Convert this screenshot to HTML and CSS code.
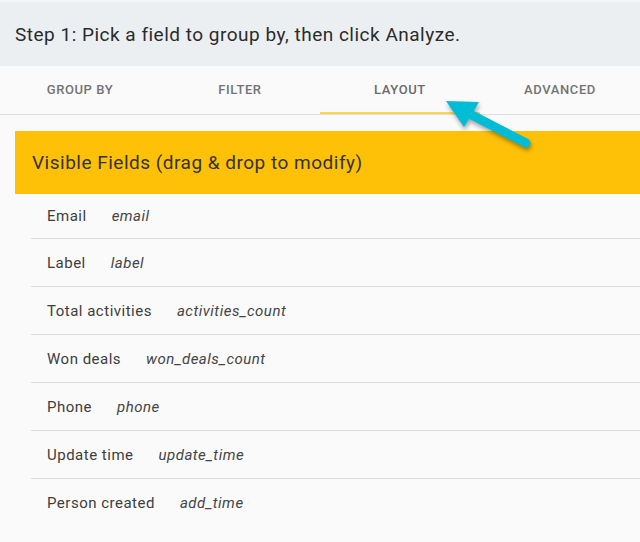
FILE: index.html
```html
<!DOCTYPE html>
<html lang="en">
<head>
	<meta charset="UTF-8">
	<title>Analyze - Layout</title>
	<link rel="stylesheet" href="styles.css">
</head>
<body>
	<div class="step">Step 1: Pick a field to group by, then click Analyze.</div>

	<div class="tabs">
		<a href="javascript:;" class="tab">Group by</a>
		<a href="javascript:;" class="tab">Filter</a>
		<a href="javascript:;" class="tab active">Layout</a>
		<a href="javascript:;" class="tab">Advanced</a>
	</div>

	<div class="content">
		<div class="panel">Visible Fields (drag &amp; drop to modify)</div>
		<ul class="fields">
			<li><span class="name">Email</span><span class="key">email</span></li>
			<li><span class="name">Label</span><span class="key">label</span></li>
			<li><span class="name">Total activities</span><span class="key">activities_count</span></li>
			<li><span class="name">Won deals</span><span class="key">won_deals_count</span></li>
			<li><span class="name">Phone</span><span class="key">phone</span></li>
			<li><span class="name">Update time</span><span class="key">update_time</span></li>
			<li><span class="name">Person created</span><span class="key">add_time</span></li>
		</ul>
	</div>

	<!-- callout arrow pointing at the layout tab -->
	<svg class="pointer" width="110" height="70" viewBox="0 0 110 70">
		<line x1="28" y1="18" x2="86" y2="48" stroke="#00bcd4" stroke-width="9" stroke-linecap="round"/>
		<polygon points="6,6 39,7 24,32" fill="#00bcd4"/>
	</svg>
</body>
</html>
```

FILE: styles.css
```css
body{margin:0;background:#fafafa;font-family:Roboto,"Liberation Sans",Arial,sans-serif;color:#333;position:relative;}
ul,li{margin:0;padding:0;list-style:none;}

.step{height:64px;border-top:2px solid #f5f6f7;background:#eceff1;display:flex;align-items:center;padding-left:15px;font-size:19px;letter-spacing:0.5px;color:#2b2b2b;}

.tabs{display:flex;border-bottom:1px solid #dedede;}
.tab{flex:1;height:48px;padding-bottom:2px;display:flex;align-items:center;justify-content:center;font-size:13px;font-weight:500;letter-spacing:0.6px;text-transform:uppercase;color:#737373;text-decoration:none;box-sizing:border-box;}
.tab.active{border-bottom:2px solid #ffd54f;padding-bottom:0;color:#6a6a6a;}

.content{padding:16px 0 0 15px;}
.panel{height:63px;background:#ffc107;display:flex;align-items:center;padding-left:17px;font-size:19px;letter-spacing:0.5px;color:#333;}

.fields{margin-left:16px;}
.fields li{height:47px;display:flex;align-items:center;gap:25px;padding-left:16px;border-bottom:1px solid #dddddd;font-size:15px;letter-spacing:0.5px;color:#3d3d3d;}
.fields li:first-child{height:43px;padding-bottom:1px;}
.fields li:last-child{border-bottom:0;}
.key{font-style:italic;color:#444;}

.pointer{position:absolute;left:440px;top:95px;filter:drop-shadow(1px 3px 2px rgba(0,0,0,0.35));}
```
